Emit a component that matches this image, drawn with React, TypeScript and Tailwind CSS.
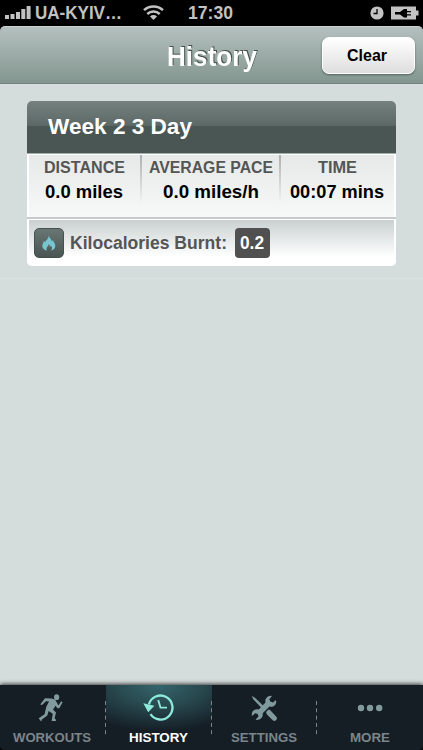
import type { ReactNode } from "react";

const stats = [
  { label: "DISTANCE", value: "0.0 miles", width: "w-[112px] pr-[2px]", labelWidth: 81, valueWidth: 78 },
  { label: "AVERAGE PACE", value: "0.0 miles/h", width: "w-[139px]", labelWidth: 124, valueWidth: 96 },
  { label: "TIME", value: "00:07 mins", width: "w-[114px]", labelWidth: 39, valueWidth: 94 },
];

type LabelProps = {
  children: string;
  width: number;
  size: number;
  height?: number;
  className?: string;
};

// Single line of text fitted to a fixed advance width
function Label({ children, width, size, height = 20, className = "" }: LabelProps) {
  return (
    <svg width={width} height={height} className={`block shrink-0 overflow-visible ${className}`}>
      <text
        x="0"
        y={height / 2 + size * 0.36}
        fontSize={size}
        textLength={width}
        lengthAdjust="spacingAndGlyphs"
        fill="currentColor"
      >
        {children}
      </text>
    </svg>
  );
}

function RunnerIcon() {
  return (
    <svg width="26" height="28" viewBox="0 0 26 28" fill="currentColor" className="mr-[3px]">
      <ellipse cx="18.600" cy="3.2" rx="2.600" ry="2.9" />
      <path d="M17.2 5.800 18.800 8.500 20.400 11.400 23.200 7.300 24.600 8.200 21.300 14.300 19.400 14.300 17.500 11.700 15 15.400 18 18.400 16.600 24.200 18.300 26 17.700 27H13.600L14.800 19.800 10.600 17 9.300 21.400 3.600 25.700 3.500 27.400 2.300 26.600.7 24.300 6.600 20.300 8.200 13 11 7.500 8 7.200 4 11.100 2.200 10.400 7 4.200 13.700 4.400Z" />
    </svg>
  );
}

function HistoryIcon() {
  return (
    <svg width="32" height="28" viewBox="0 0 32 28" fill="none" stroke="currentColor" className="mr-[2px]">
      <path d="M6.900 10.400a12 12 0 1 1 1.600 9.800" strokeWidth="2.300" />
      <path d="M1.300 9.300 12.400 11.800 6.200 18.200Z" fill="currentColor" stroke="none" />
      <path d="m16.200 6 2.300 7.600h6.500" strokeWidth="1.900" />
    </svg>
  );
}

function ToolsIcon() {
  return (
    <svg width="26" height="26" viewBox="0 0 26 26" fill="currentColor">
      <path d="M.6.700 4.300 3 13.500 12 11.500 14 2.500 4.600Z" />
      <path d="m15 17 2.500-2.500 1.800.8 5.800 6.200a2.400 2.400 0 0 1-3.600 3.600l-5.600-5.600Z" />
      <path d="M19.800.8 21 1 18.300 4.300 19.200 6.600 22 7.400 24.900 5 25.200 6.300C25.300 10.500 22 12.500 18.500 11.600L11.700 18.200C12.300 22 9.800 25 5.800 24.900L4.600 24.600 7.500 21.500 6.700 19 4.200 18.300 1 21 .7 19.800C.7 15.800 4 13.500 7.700 14.400L14.500 7.500C13.700 4 16 1 19.800.8Z" />
    </svg>
  );
}

function MoreIcon() {
  return (
    <svg width="26" height="8" viewBox="0 0 26 8" fill="currentColor">
      <circle cx="4" cy="4" r="3.2" />
      <circle cx="13" cy="4" r="3.2" />
      <circle cx="22.200" cy="4" r="3.2" />
    </svg>
  );
}

function FlameIcon() {
  return (
    <svg width="14" height="16" viewBox="0 0 14 16" fill="#76c7d2">
      <path d="M6.800 0C7 3 9.800 3.800 9.700 6.800l1.200-2C11 7 13.400 8 13.300 11c-.1 2.500-1.800 4-4.200 4.600 1.500-1.800 1-3.800-.4-5-.1 1-.4 1.200-.9 1.500.1-1.500-.3-2.300-1-3 0 1.800-2.300 2.900-2.300 4.500 0 .8.200 1.400.6 2C2.300 15 .3 13.500.3 10.800c0-2 1.500-2.900 1.600-5 .7.500 1 1.100 1.200 1.900C3.500 5.200 6.900 4 6.800 0Z" />
    </svg>
  );
}

function StatusBar() {
  return (
    <div className="flex h-[26px] shrink-0 items-center bg-black pl-[5px] pr-1 text-[#c2c2c2]">
      <svg width="26" height="14" viewBox="0 0 26 14" fill="currentColor">
        <path d="M0 9h4v4H0zM5.500 8h4v5h-4zM11 6h4v7h-4zM16.300 3h4v10h-4zM21.600 0h4v13h-4z" />
      </svg>
      <Label width={87} size={18} className="ml-1">UA-KYIV…</Label>
      <svg width="21" height="16" viewBox="0 0 21 16" fill="none" stroke="currentColor" strokeWidth="2.500" className="ml-[21px]">
        <path d="M1 5.200a14 14 0 0 1 19 0M4.300 9a9 9 0 0 1 12.400 0" />
        <path d="M7 11.500a5 5 0 0 1 7 0L10.500 15Z" fill="currentColor" stroke="none" />
      </svg>
      <Label width={45} size={18} className="ml-6">17:30</Label>
      <svg width="14" height="14" viewBox="0 0 14 14" fill="none" className="ml-auto">
        <circle cx="7" cy="7" r="6.600" fill="currentColor" />
        <path d="M7 3v4.500H3.500" stroke="#000" strokeWidth="1.300" />
      </svg>
      <svg width="28" height="14" viewBox="0 0 28 14" className="ml-[7px]">
        <path d="M0 .5h25v4h2.500v5H25v4H0z" fill="currentColor" />
        <path d="M4 6h5l4-3h3v2h4v1.300h-4v2h4v1.300h-4v2h-3l-4-3H4z" fill="#000" />
      </svg>
    </div>
  );
}

type TabProps = {
  label: string;
  width: number;
  active?: boolean;
  last?: boolean;
  children: ReactNode;
};

function Tab({ label, width, active, last, children }: TabProps) {
  return (
    <button
      className={`relative flex flex-1 flex-col items-center ${
        active
          ? "bg-[radial-gradient(90%_72%_at_top,#34656b_0%,#28494f_45%,#151d25_100%)] text-white"
          : "text-[#7c858a]"
      }`}
    >
      <span className={`flex h-[43px] items-center justify-center pt-[3px] ${active ? "text-[#8de9db]" : "text-[#819a9d]"}`}>
        {children}
      </span>
      <Label width={width} size={13.5} height={18} className="mr-px">{label}</Label>
      {!last && (
        <svg width="1" height="34" className="absolute right-0 top-4">
          <path d="M.5 0v34" stroke="#78868b" strokeDasharray="4 3.300" />
        </svg>
      )}
    </button>
  );
}

export default function App() {
  return (
    <div className="flex h-[750px] w-[423px] flex-col overflow-hidden bg-black font-['Liberation_Sans',sans-serif] font-bold">
      <StatusBar />

      <header className="flex h-[58px] shrink-0 items-center rounded-t-[5px] border-b border-t border-b-[#71817c] border-t-[#c9d0ce] bg-linear-to-b from-[#b5c0be] to-[#839690] pl-[167px] pr-2 text-white">
        <Label width={90} size={28} height={32} className="mt-0.5 [filter:drop-shadow(1px_-1px_0.5px_#46514d)]">History</Label>
        <button className="ml-auto flex h-[37px] w-[93px] items-center justify-center rounded-[7px] border border-white bg-linear-to-b from-white to-[#dedede] text-black shadow-[0_1px_2px_#52615c]">
          <Label width={40} size={17} className="-mt-px -ml-1">Clear</Label>
        </button>
      </header>

      <main className="flex-1 border-t border-[#d8dbe0] bg-[#d5dddc] pt-4">
        <div className="mx-auto w-[369px] overflow-hidden rounded-[5px] bg-white">
          <div className="flex h-[52px] items-center bg-[linear-gradient(to_bottom,#74817e_0%,#5d6966_47%,#4a5653_48%,#4a5653_100%)] pl-[21px] text-white">
            <Label width={144} size={22.5} height={26} className="-mt-0.5">Week 2 3 Day</Label>
          </div>
          <div className="border-b-2 border-t border-b-[#c6cacb] border-t-[#a4acaa] bg-white px-[2px] pt-px">
            <div className="flex h-[62px] bg-linear-to-b from-[#e7e9e9] to-[#f7f8f8]">
              {stats.map((stat, i) => (
                <div key={stat.label} className={`relative flex shrink-0 flex-col items-center ${stat.width}`}>
                  <Label width={stat.labelWidth} size={16} height={24} className="text-[#535655]">{stat.label}</Label>
                  <Label width={stat.valueWidth} size={18} height={26} className="text-black">{stat.value}</Label>
                  {i < 2 && <span className="absolute -right-px top-0 h-12 w-[2px] bg-linear-to-b from-[#aeb1b3] to-transparent" />}
                </div>
              ))}
            </div>
          </div>
          <div className="flex h-[47px] items-center border-x-2 border-t border-white bg-linear-to-b from-[#c9d1d0] to-white to-80% pl-[5px]">
            <span className="flex size-[30px] items-center justify-center rounded-[5px] border border-[#46514e] bg-linear-to-b from-[#6a7673] to-[#495552]">
              <FlameIcon />
            </span>
            <Label width={157} size={18} className="ml-[6px] text-[#555]">Kilocalories Burnt:</Label>
            <span className="ml-2 flex h-[30px] w-[35px] items-center justify-center rounded-[4px] bg-[#505050] text-white">
              <Label width={24} size={17.5} className="-ml-0.5">0.2</Label>
            </span>
          </div>
        </div>
        <div className="mt-3 h-px bg-[#dce2e2]" />
      </main>

      <nav className="relative flex h-[65px] shrink-0 rounded-b-[5px] bg-[#151d25] shadow-[0_-1px_4px_#333]">
        <Tab label="WORKOUTS" width={78}><RunnerIcon /></Tab>
        <Tab label="HISTORY" width={59} active><HistoryIcon /></Tab>
        <Tab label="SETTINGS" width={66}><ToolsIcon /></Tab>
        <Tab label="MORE" width={40} last><MoreIcon /></Tab>
      </nav>
    </div>
  );
}
